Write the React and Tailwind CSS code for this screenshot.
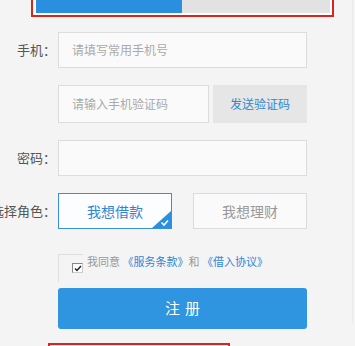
import clsx from 'clsx'

const FONT = "font-['Microsoft_YaHei','Noto_Sans_CJK_SC',sans-serif]"

function Label({ children }) {
  return (
    <div className="flex w-[56px] shrink-0 justify-end whitespace-nowrap text-[13px] text-[#555]">
      {children}
    </div>
  )
}

function Field({ placeholder, className }) {
  return (
    <div
      className={clsx(
        'flex items-center border border-[#dcdcdc] bg-[#fafafa] pl-[13px] text-[12px] text-[#aaa]',
        className
      )}
    >
      {placeholder}
    </div>
  )
}

export default function App() {
  return (
    <div className={clsx('h-[346px] w-[355px] overflow-hidden bg-[#f4f4f4]', FONT)}>
      <div className="h-full w-[353px] border-r border-[#ebebeb]">
        {/* Tab strip (cut off at top) */}
        <div className="-mt-[22px] ml-[31px] w-[303px] border-2 border-[#d8261e] bg-white py-[2px] pl-[3px] pr-[2px]">
          <div className="flex h-[31px]">
            <div className="w-[146px] bg-[#2b8fe0]" />
            <div className="flex-1 bg-[#e2e2e2]" />
          </div>
        </div>

        {/* Phone */}
        <div className="mt-[15px] flex items-center">
          <Label>手机：</Label>
          <Field placeholder="请填写常用手机号" className="ml-[2px] h-[36px] w-[249px]" />
        </div>

        {/* SMS code */}
        <div className="mt-[17px] flex">
          <div className="w-[58px] shrink-0" />
          <Field placeholder="请输入手机验证码" className="h-[38px] w-[151px]" />
          <div className="ml-[4px] flex h-[38px] w-[94px] items-center justify-center bg-[#e6e6e6] text-[12px] text-[#2f86d4]">
            发送验证码
          </div>
        </div>

        {/* Password */}
        <div className="mt-[17px] flex items-center">
          <Label>密码：</Label>
          <Field className="ml-[2px] h-[36px] w-[249px]" />
        </div>

        {/* Role */}
        <div className="mt-[17px] flex items-center">
          <Label>选择角色：</Label>
          <div className="relative ml-[2px] flex h-[36px] w-[114px] items-center justify-center border border-[#3a90d8] bg-[#fcfdff] text-[14px] text-[#2f86d4]">
            我想借款
            <svg className="absolute bottom-0 right-0" width="19" height="17" viewBox="0 0 19 17">
              <path d="M19 0 L19 17 L0 17 Z" fill="#2b8fe0" />
              <path d="M9.5 11.5 L12 14 L16 9.5" stroke="#fff" strokeWidth="1.6" fill="none" />
            </svg>
          </div>
          <div className="ml-[21px] flex h-[36px] w-[114px] items-center justify-center border border-[#dcdcdc] bg-[#fafafa] text-[14px] text-[#999]">
            我想理财
          </div>
        </div>

        {/* Agreement */}
        <div className="mt-[25px] flex items-start">
          <div className="w-[58px] shrink-0" />
          <div className="flex h-[28px] w-[25px] items-start justify-end border-l border-t border-[#dedede] pt-[8px]">
            <div className="flex h-[10px] w-[11px] items-center justify-center border border-[#888] border-r-[#ccc] border-b-[#ccc] bg-white">
              <svg width="8" height="7" viewBox="0 0 8 7">
                <path d="M1 3.5 L3 5.5 L7 1" stroke="#222" strokeWidth="1.5" fill="none" />
              </svg>
            </div>
          </div>
          <div className="ml-[4px] whitespace-nowrap text-[11px] leading-[14px] text-[#999]">
            我同意 <span className="text-[#2f86d4]">《服务条款》</span>和 <span className="text-[#2f86d4]">《借入协议》</span>
          </div>
        </div>

        {/* Submit */}
        <div className="mt-[6px] flex">
          <div className="w-[58px] shrink-0" />
          <div className="flex h-[41px] w-[249px] items-center justify-center rounded-[3px] bg-[#2f95e0] pl-[5px] text-[15px] tracking-[5px] text-white">
            注册
          </div>
        </div>

        {/* Next red outline (cut off at bottom) */}
        <div className="ml-[48px] mt-[14px] h-[20px] w-[182px] border-2 border-[#e0201c]" />
      </div>
    </div>
  )
}
